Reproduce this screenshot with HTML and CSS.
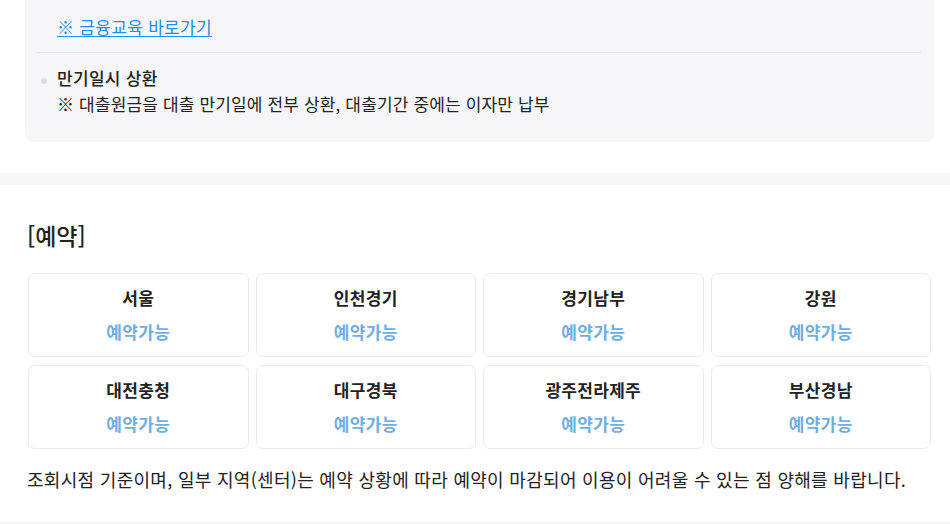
FILE: index.html
```html
<!DOCTYPE html>
<html lang="ko">
<head>
    <meta charset="UTF-8">
    <meta name="viewport" content="width=device-width, initial-scale=1.0">
    <title>대출 안내</title>
    <link rel="stylesheet" href="styles.css">
</head>
<body>
    <div class="info">
        <div class="info-box">
            <div class="info-link">
                <a href="#">※ 금융교육 바로가기</a>
            </div>
            <ul class="info-list">
                <li>
                    <p class="item-title">만기일시 상환</p>
                    <p class="item-desc">※ 대출원금을 대출 만기일에 전부 상환, 대출기간 중에는 이자만 납부</p>
                </li>
            </ul>
        </div>
    </div>

    <div class="band"></div>

    <section class="reserve">
        <h3>[예약]</h3>
        <div class="region-grid">
            <div class="region"><strong>서울</strong><span>예약가능</span></div>
            <div class="region"><strong>인천경기</strong><span>예약가능</span></div>
            <div class="region"><strong>경기남부</strong><span>예약가능</span></div>
            <div class="region"><strong>강원</strong><span>예약가능</span></div>
            <div class="region"><strong>대전충청</strong><span>예약가능</span></div>
            <div class="region"><strong>대구경북</strong><span>예약가능</span></div>
            <div class="region"><strong>광주전라제주</strong><span>예약가능</span></div>
            <div class="region"><strong>부산경남</strong><span>예약가능</span></div>
        </div>
        <p class="note">조회시점 기준이며, 일부 지역(센터)는 예약 상황에 따라 예약이 마감되어 이용이 어려울 수 있는 점 양해를 바랍니다.</p>
    </section>

    <div class="band"></div>
</body>
</html>
```

FILE: styles.css
```css
body {
    font-family: "Noto Sans CJK KR", "Noto Sans", sans-serif;
    margin: 0;
    color: #222;
    background-color: #fff;
    overflow: hidden;
    letter-spacing: 0.3px;
}
p {
    margin: 0;
}
.info {
    padding: 0 16px 31px 25px;
}
.info-box {
    background-color: #f6f6f8;
    border-radius: 0 0 8px 8px;
    padding: 14px 13px 25px;
}
.info-link {
    padding: 0 0 12px 19px;
    border-bottom: 1px solid #e4e4e6;
    line-height: 26px;
}
.info-link a {
    color: #1f8ff0;
    font-size: 17px;
    text-decoration: underline;
    text-underline-offset: 2px;
}
.info-list {
    list-style: none;
    margin: 0;
    padding: 12px 0 0 19px;
}
.info-list li {
    position: relative;
    font-size: 17px;
    line-height: 26px;
    letter-spacing: 0.15px;
}
.info-list li::before {
    content: "";
    position: absolute;
    left: -16px;
    top: 13px;
    width: 6px;
    height: 6px;
    border-radius: 50%;
    background-color: #dcdcde;
}
.item-title {
    font-weight: 500;
    letter-spacing: 0.3px;
}
.band {
    height: 12px;
    background-color: #f5f6f8;
}
.reserve {
    padding: 35px 19px 30px 27px;
}
.reserve h3 {
    margin: 0;
    font-size: 23px;
    line-height: 30px;
    font-weight: 500;
    letter-spacing: 0;
    color: #222;
}
.region-grid {
    display: grid;
    grid-template-columns: repeat(4, 1fr);
    gap: 8px 7px;
    margin: 23px 0 0 1px;
}
.region {
    display: flex;
    flex-direction: column;
    align-items: center;
    gap: 10px;
    padding: 12px 0;
    border: 1px solid #ebebeb;
    border-radius: 7px;
    font-size: 17px;
    line-height: 24px;
}
.region strong {
    font-weight: 700;
    color: #222;
}
.region span {
    font-weight: 700;
    color: #6eaee6;
}
.note {
    margin-top: 17px;
    font-size: 18px;
    line-height: 26px;
    letter-spacing: 0.3px;
    color: #222;
}
```
